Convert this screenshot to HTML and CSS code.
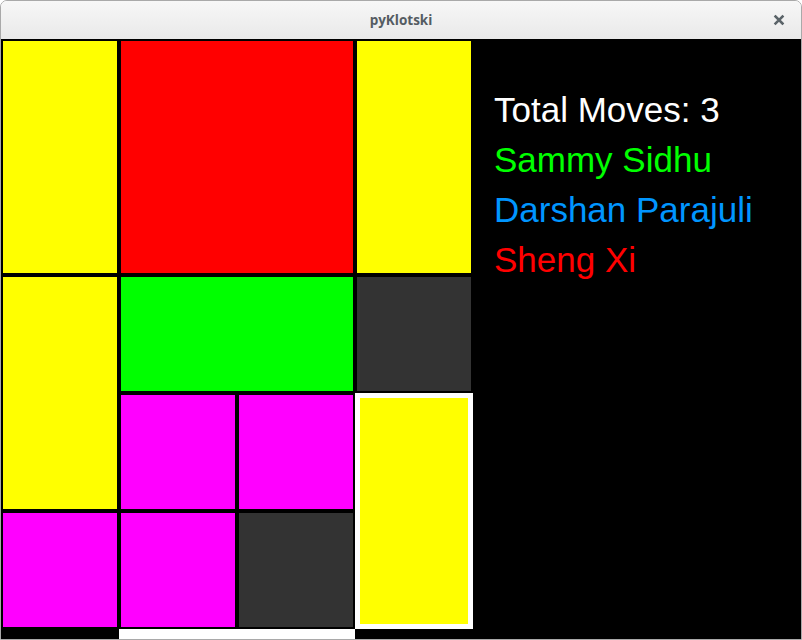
FILE: index.html
```html
<!DOCTYPE html>
<html>
<head>
<meta charset="utf-8">
<title>pyKlotski</title>
<link rel="stylesheet" href="styles.css">
</head>
<body>
<div class="window">
  <div class="titlebar">
    <span class="title">pyKlotski</span>
    <span class="close">
      <svg width="12" height="12" viewBox="0 0 12 12"><path d="M2.5 2.5 L9.5 9.5 M9.5 2.5 L2.5 9.5" stroke="#5b6469" stroke-width="2.5" stroke-linecap="square"/></svg>
    </span>
  </div>
  <div class="content">
    <div class="board-wrap">
      <div class="board">
        <div class="piece yellow c1 r1 h2"></div>
        <div class="piece red c2 r1 w2 h2"></div>
        <div class="piece yellow c4 r1 h2"></div>
        <div class="piece yellow c1 r3 h2"></div>
        <div class="piece green c2 r3 w2"></div>
        <div class="piece empty c4 r3"></div>
        <div class="piece magenta c2 r4"></div>
        <div class="piece magenta c3 r4"></div>
        <div class="piece yellow selected c4 r4 h2"></div>
        <div class="piece magenta c1 r5"></div>
        <div class="piece magenta c2 r5"></div>
        <div class="piece empty c3 r5"></div>
      </div>
      <div class="exit-row"><div class="exit"></div></div>
    </div>
    <div class="info">
      <div class="line white">Total Moves: 3</div>
      <div class="line green-t">Sammy Sidhu</div>
      <div class="line blue-t">Darshan Parajuli</div>
      <div class="line red-t">Sheng Xi</div>
    </div>
  </div>
</div>
</body>
</html>
```

FILE: styles.css
```css
html, body {
  margin: 0;
  padding: 0;
  background: #ffffff;
}
.window {
  width: 800px;
  height: 638px;
  border: 1px solid #a9a9a9;
  border-radius: 7px 7px 0 0;
  overflow: hidden;
  display: flex;
  flex-direction: column;
}
.titlebar {
  height: 38px;
  flex: none;
  background: linear-gradient(#f7f7f7, #e9e9e9);
  display: flex;
  align-items: center;
  justify-content: center;
  position: relative;
}
.title {
  font-family: "Open Sans", "DejaVu Sans", sans-serif;
  font-weight: 700;
  font-size: 13.5px;
  color: #545c62;
  margin-top: -1px;
}
.close {
  position: absolute;
  right: 16px;
  top: 13px;
  width: 12px;
  height: 12px;
  display: flex;
}
.content {
  height: 600px;
  background: #000;
  display: flex;
}
.board-wrap {
  width: 472px;
  display: flex;
  flex-direction: column;
}
.board {
  display: grid;
  grid-template-columns: repeat(4, 118px);
  grid-template-rows: repeat(5, 118px);
}
.piece {
  margin: 2px;
}
.c1 { grid-column-start: 1; }
.c2 { grid-column-start: 2; }
.c3 { grid-column-start: 3; }
.c4 { grid-column-start: 4; }
.r1 { grid-row-start: 1; }
.r3 { grid-row-start: 3; }
.r4 { grid-row-start: 4; }
.r5 { grid-row-start: 5; }
.w2 { grid-column-end: span 2; }
.h2 { grid-row-end: span 2; }
.yellow { background: #ffff00; }
.red { background: #ff0000; }
.green { background: #00ff00; }
.magenta { background: #ff00ff; }
.empty { background: #333333; }
.selected {
  margin: 0;
  border: 5px solid #ffffff;
}
.exit-row {
  height: 10px;
  display: flex;
  padding-left: 118px;
}
.exit {
  width: 236px;
  background: #ffffff;
}
.info {
  padding-top: 46px;
  padding-left: 21px;
}
.line {
  font-family: "Liberation Sans", Arial, sans-serif;
  font-size: 35px;
  line-height: 50px;
  white-space: nowrap;
}
.white { color: #ffffff; }
.green-t { color: #00ff00; }
.blue-t { color: #0096ff; }
.red-t { color: #ff0000; }
```
